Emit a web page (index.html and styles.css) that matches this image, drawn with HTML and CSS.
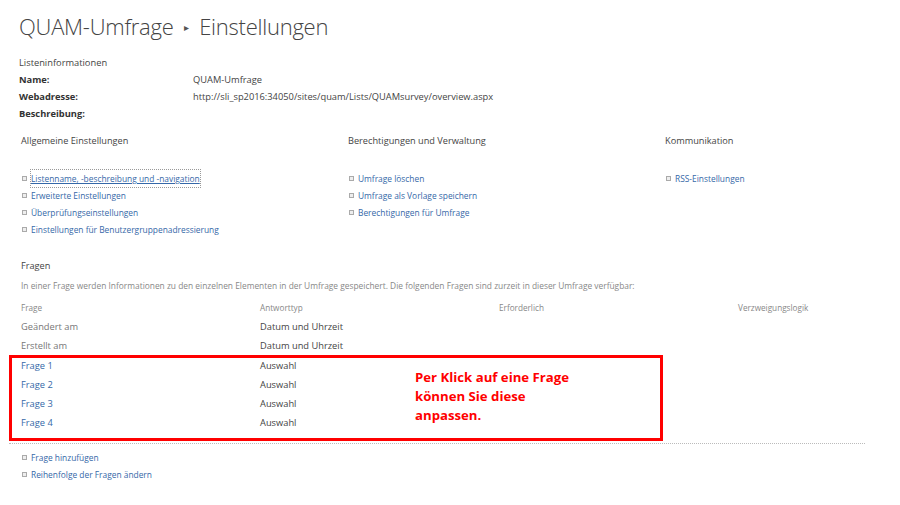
FILE: index.html
```html
<!DOCTYPE html>
<html lang="de">

<head>
    <meta charset="UTF-8">
    <meta name="viewport" content="width=device-width, initial-scale=1.0">
    <title>QUAM-Umfrage - Einstellungen</title>
    <link rel="stylesheet" href="styles.css">
</head>

<body>
    <div class="page">
        <h1 class="title">QUAM-Umfrage <span class="crumb">&#9656;</span> Einstellungen</h1>

        <div class="listinfo">
            <div class="small-head">Listeninformationen</div>
            <div class="info-row"><span class="info-label">Name:</span><span>QUAM-Umfrage</span></div>
            <div class="info-row"><span class="info-label">Webadresse:</span><span>http://sli_sp2016:34050/sites/quam/Lists/QUAMsurvey/overview.aspx</span></div>
            <div class="info-row"><span class="info-label">Beschreibung:</span><span></span></div>
        </div>

        <div class="settings">
            <div class="settings-col">
                <h3>Allgemeine Einstellungen</h3>
                <ul class="links">
                    <li><a href="#" class="focused">Listenname, -beschreibung und -navigation</a></li>
                    <li><a href="#">Erweiterte Einstellungen</a></li>
                    <li><a href="#">Überprüfungseinstellungen</a></li>
                    <li><a href="#">Einstellungen für Benutzergruppenadressierung</a></li>
                </ul>
            </div>
            <div class="settings-col">
                <h3>Berechtigungen und Verwaltung</h3>
                <ul class="links">
                    <li><a href="#">Umfrage löschen</a></li>
                    <li><a href="#">Umfrage als Vorlage speichern</a></li>
                    <li><a href="#">Berechtigungen für Umfrage</a></li>
                </ul>
            </div>
            <div class="settings-col">
                <h3>Kommunikation</h3>
                <ul class="links">
                    <li><a href="#">RSS-Einstellungen</a></li>
                </ul>
            </div>
        </div>

        <div class="questions">
            <h3>Fragen</h3>
            <p class="desc">In einer Frage werden Informationen zu den einzelnen Elementen in der Umfrage gespeichert. Die folgenden Fragen sind zurzeit in dieser Umfrage verfügbar:</p>

            <div class="qtable">
                <div class="qrow qhead">
                    <span>Frage</span><span>Antworttyp</span><span>Erforderlich</span><span>Verzweigungslogik</span>
                </div>
                <div class="qrow">
                    <span class="muted">Geändert am</span><span>Datum und Uhrzeit</span><span></span><span></span>
                </div>
                <div class="qrow">
                    <span class="muted">Erstellt am</span><span>Datum und Uhrzeit</span><span></span><span></span>
                </div>
                <div class="qrow">
                    <a href="#">Frage 1</a><span>Auswahl</span><span></span><span></span>
                </div>
                <div class="qrow">
                    <a href="#">Frage 2</a><span>Auswahl</span><span></span><span></span>
                </div>
                <div class="qrow">
                    <a href="#">Frage 3</a><span>Auswahl</span><span></span><span></span>
                </div>
                <div class="qrow">
                    <a href="#">Frage 4</a><span>Auswahl</span><span></span><span></span>
                </div>

                <div class="highlight"></div>
                <div class="note">Per Klick auf eine Frage<br>können Sie diese<br>anpassen.</div>
            </div>

            <div class="divider"></div>

            <ul class="links">
                <li><a href="#">Frage hinzufügen</a></li>
                <li><a href="#">Reihenfolge der Fragen ändern</a></li>
            </ul>
        </div>
    </div>
</body>
</html>
```

FILE: styles.css
```css
body {
    margin: 0;
    background: #fff;
    font-family: 'Open Sans', 'Noto Sans', sans-serif;
    color: #444;
}

.page {
    padding: 10px 0 0 19px;
    width: 850px;
}

.title {
    margin: 0;
    font-size: 22px;
    font-weight: 300;
    color: #444;
    line-height: 32px;
    letter-spacing: -0.25px;
}

.crumb {
    font-size: 10px;
    vertical-align: 4px;
    margin: 0 5px;
    color: #555;
}

.listinfo {
    margin-top: 11px;
    font-size: 9.3px;
}

.small-head {
    color: #444;
    line-height: 17px;
}

.info-row {
    display: grid;
    grid-template-columns: 174px 1fr;
    line-height: 17px;
    color: #444;
}

.info-label {
    font-weight: bold;
    color: #333;
}

.settings {
    display: grid;
    grid-template-columns: 327px 317px 1fr;
    margin-top: 10px;
    margin-left: 2px;
}

h3 {
    margin: 0;
    font-size: 9.2px;
    font-weight: normal;
    color: #444;
    line-height: 18px;
}

.links {
    list-style: none;
    margin: 0;
    padding: 0;
    font-size: 8.4px;
}

.settings .links {
    margin-top: 20px;
}

.links li {
    display: flex;
    align-items: center;
    gap: 4px;
    line-height: 17px;
}

.links li::before {
    content: "";
    width: 3px;
    height: 3px;
    border: 1px solid #aaa;
    background: #eee;
    margin-left: 1px;
}

a {
    color: #3568a8;
    text-decoration: none;
}

a.focused {
    text-decoration: underline;
    outline: 1px dotted #999;
}

.questions {
    margin-top: 19px;
    margin-left: 2px;
}

.desc {
    margin: 4px 0 0;
    font-size: 8.4px;
    color: #888;
    line-height: 14px;
}

.qtable {
    position: relative;
    margin-top: 5px;
}

.qrow {
    display: grid;
    grid-template-columns: 239px 239px 239px 1fr;
    font-size: 9.3px;
    line-height: 19.2px;
    color: #444;
}

.qhead {
    font-size: 8.2px;
    color: #888;
}

.muted {
    color: #777;
}

.highlight {
    position: absolute;
    left: -12px;
    top: 57px;
    width: 648px;
    height: 80px;
    border: 3px solid #ff0000;
}

.note {
    position: absolute;
    left: 394px;
    top: 70px;
    color: #ff0000;
    font-weight: bold;
    font-size: 13.2px;
    line-height: 19px;
}

.divider {
    margin: 11px 0 5px -12px;
    width: 856px;
    border-top: 1px dotted #bbb;
}
```
